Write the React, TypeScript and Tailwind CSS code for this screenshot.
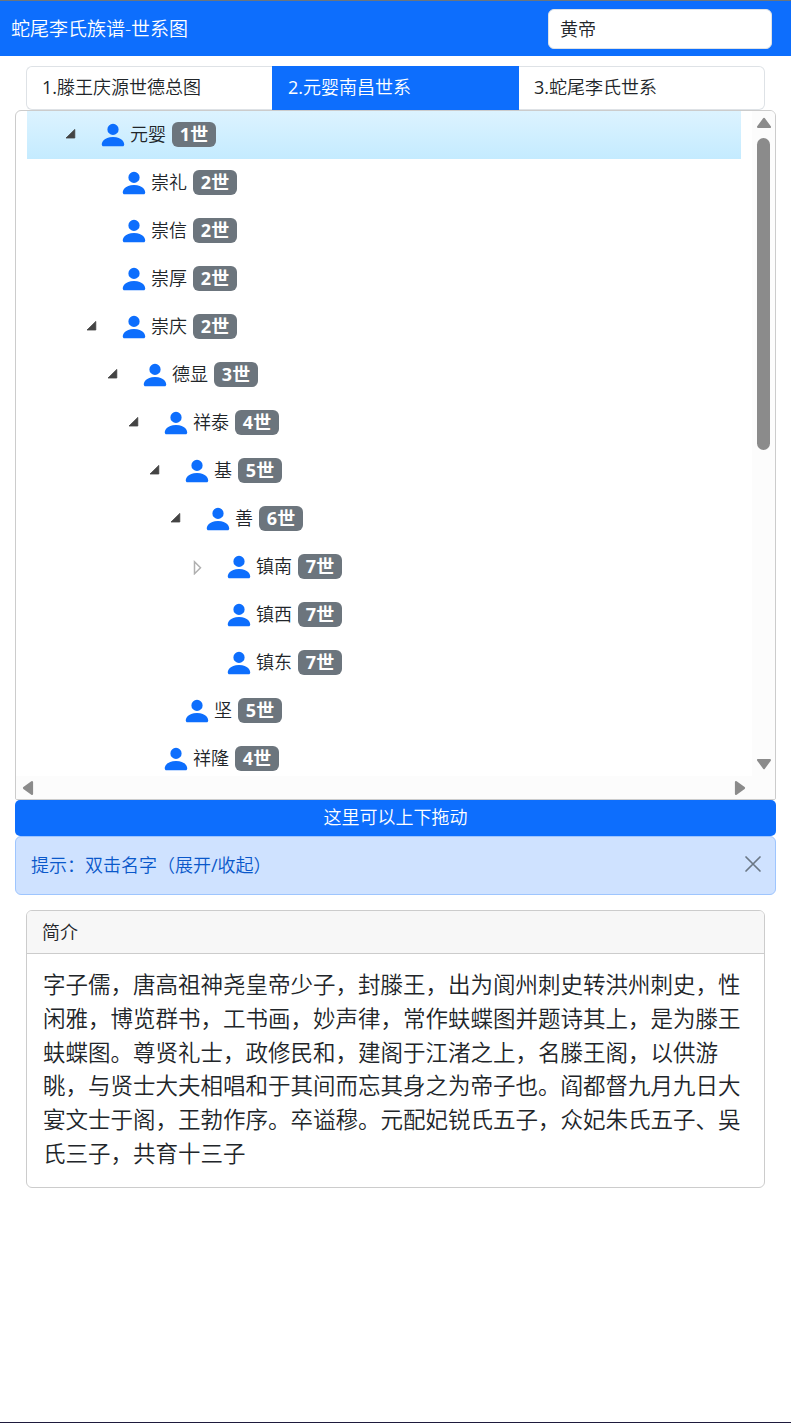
type Person = { name: string; generation: number; depth: number; state?: "open" | "closed" };

const people: Person[] = [
  { name: "元婴", generation: 1, depth: 0, state: "open" },
  { name: "崇礼", generation: 2, depth: 1 },
  { name: "崇信", generation: 2, depth: 1 },
  { name: "崇厚", generation: 2, depth: 1 },
  { name: "崇庆", generation: 2, depth: 1, state: "open" },
  { name: "德显", generation: 3, depth: 2, state: "open" },
  { name: "祥泰", generation: 4, depth: 3, state: "open" },
  { name: "基", generation: 5, depth: 4, state: "open" },
  { name: "善", generation: 6, depth: 5, state: "open" },
  { name: "镇南", generation: 7, depth: 6, state: "closed" },
  { name: "镇西", generation: 7, depth: 6 },
  { name: "镇东", generation: 7, depth: 6 },
  { name: "坚", generation: 5, depth: 4 },
  { name: "祥隆", generation: 4, depth: 3 },
];

const biography = [
  "字子儒，唐高祖神尧皇帝少子，封滕王，出为阆州刺史转洪州刺史，性",
  "闲雅，博览群书，工书画，妙声律，常作蚨蝶图并题诗其上，是为滕王",
  "蚨蝶图。尊贤礼士，政修民和，建阁于江渚之上，名滕王阁，以供游",
  "眺，与贤士大夫相唱和于其间而忘其身之为帝子也。阎都督九月九日大",
  "宴文士于阁，王勃作序。卒谥穆。元配妃锐氏五子，众妃朱氏五子、吳",
  "氏三子，共育十三子",
];

function PersonIcon() {
  return (
    <svg viewBox="0 0 16 16" className="size-[30px] shrink-0 fill-[#0d6efd]">
      <path d="M3 14s-1 0-1-1 1-4 6-4 6 3 6 4-1 1-1 1zm5-6a3 3 0 1 0 0-6 3 3 0 0 0 0 6" />
    </svg>
  );
}

function Expander({ state }: { state?: "open" | "closed" }) {
  return (
    <svg viewBox="0 0 16 16" className="mr-[18px] size-4 shrink-0">
      {state === "open" && <path d="M2 11 10.8 2.4V11z" fill="#444" stroke="#444" strokeWidth=".8" />}
      {state === "closed" && <path d="M4.5 2.7v12l6-6z" fill="#fff" stroke="#b0b0b0" strokeWidth="1.5" />}
    </svg>
  );
}

function TreeRow({ person }: { person: Person }) {
  return (
    <div
      className={
        "flex h-12 shrink-0 items-center pl-[37px] " +
        (person.depth === 0 ? "bg-linear-to-b from-[#dcf3ff] to-[#c4ebff]" : "")
      }
    >
      <div className="shrink-0" style={{ width: person.depth * 21 }} />
      <Expander state={person.state} />
      <PersonIcon />
      <span className="mb-[2px] ml-[2px] whitespace-nowrap">{person.name}</span>
      <span className="mb-[2px] ml-[6px] flex h-[25px] w-11 items-center justify-center rounded-[6px] bg-[#6c757d] font-bold text-white">
        {person.generation}世
      </span>
    </div>
  );
}

function Arrow({ className }: { className: string }) {
  return (
    <svg viewBox="0 0 16 12" className={"h-3 w-4 shrink-0 " + className}>
      <path d="M8 2 13.9 10H2.1z" fill="#8b8b8b" stroke="#8b8b8b" strokeWidth="2.2" strokeLinejoin="round" />
    </svg>
  );
}

export default function App() {
  return (
    <div className="flex h-[1423px] w-[791px] flex-col overflow-hidden border-b border-[#1e1a3c] bg-white font-['Open_Sans','Noto_Sans_CJK_SC',sans-serif] text-[18px] leading-[27px] font-[350] text-[#212529]">
      <header className="flex h-14 shrink-0 items-center justify-between border-t border-[#6c757d] bg-[#0d6efd] pr-[19px] pl-[11px]">
        <h1 className="pt-px text-[19px] text-white">蛇尾李氏族谱-世系图</h1>
        <input
          aria-label="黄帝"
          defaultValue="黄帝"
          className="mt-px h-10 w-[224px] rounded-[6px] border border-[#dee2e6] bg-white px-[11px] pb-[3px]"
        />
      </header>

      <nav className="mx-[26px] mt-[10px] flex h-11 shrink-0">
        <button className="w-[246px] rounded-l-[6px] border border-r-0 border-[#dee2e6] pb-[2px] pl-[15px] text-left">
          <span className="font-normal">1.</span>滕王庆源世德总图
        </button>
        <button className="w-[247px] bg-[#0d6efd] pb-[2px] pl-4 text-left text-white">
          <span className="font-normal">2.</span>元婴南昌世系
        </button>
        <button className="w-[246px] rounded-r-[6px] border border-l-0 border-[#dee2e6] pb-[2px] pl-[15px] text-left">
          <span className="font-normal">3.</span>蛇尾李氏世系
        </button>
      </nav>

      <main className="mx-[15px] flex flex-col">
        <section className="flex h-[690px] w-[761px] shrink-0 flex-col overflow-hidden rounded-t-[6px] rounded-b-[2px] border border-[#ccc]">
          <div className="flex h-[665px] shrink-0">
            <div className="flex h-full w-[736px] flex-col overflow-hidden pr-[11px] pl-[11px]">
              {people.map((person) => (
                <TreeRow key={person.name} person={person} />
              ))}
            </div>
            <div className="flex flex-1 flex-col items-center bg-[#fcfcfc] pt-[6px] pb-[6px]">
              <Arrow className="" />
              <div className="mt-[9px] h-[312px] w-[13px] shrink-0 rounded-full bg-[#8b8b8b]" />
              <Arrow className="mt-auto rotate-180" />
            </div>
          </div>
          <div className="flex flex-1 items-center justify-between bg-[#fcfcfc] pt-px pr-[27px] pl-1">
            <Arrow className="-rotate-90" />
            <Arrow className="rotate-90" />
          </div>
        </section>

        <button className="h-9 shrink-0 rounded-[5px] bg-[#0d6efd] pb-px text-white">这里可以上下拖动</button>

        <div className="flex h-[59px] shrink-0 items-center justify-between rounded-[6px] border border-[#9ec5fe] bg-[#cfe2ff] pr-[13.5px] pl-[15px] text-[#0a58ca]">
          <span>
            提示：双击名字（展开<span className="font-normal">/</span>收起）
          </span>
          <svg viewBox="0 0 18 18" className="mb-1 size-[18px]">
            <path d="m2 2 14 14M16 2 2 16" fill="none" stroke="#6b7785" strokeWidth="1.7" strokeLinecap="round" />
          </svg>
        </div>

        <article className="mx-[11px] mt-[15px] flex h-[278px] shrink-0 flex-col overflow-hidden rounded-[6px] border border-[#ccc]">
          <h2 className="flex h-[43px] shrink-0 items-center border-b border-[#ccc] bg-[#f7f7f7] pl-[15px]">简介</h2>
          <p className="pt-[14px] pl-4 text-[22.5px] leading-[33.75px]">
            {biography.map((line) => (
              <span key={line} className="block whitespace-nowrap">
                {line}
              </span>
            ))}
          </p>
        </article>
      </main>
    </div>
  );
}
